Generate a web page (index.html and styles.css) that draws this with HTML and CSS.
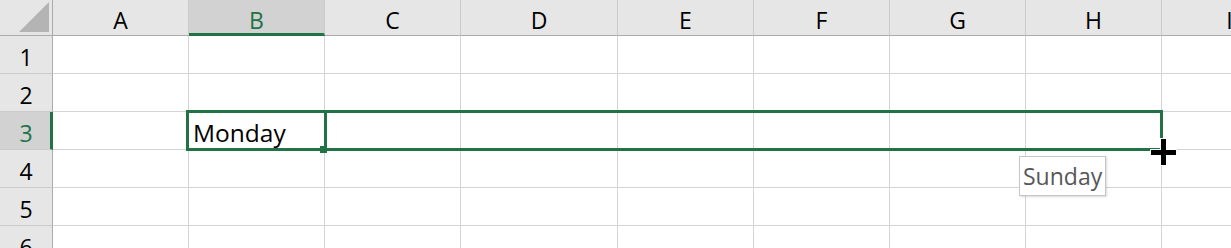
FILE: index.html
```html
<!DOCTYPE html>
<html>
<head>
  <title>Sheet1</title>
  <link rel="stylesheet" href="styles.css">
</head>
<body>
<div class="sheet">
  <!-- column headers -->
  <div class="corner">
    <svg width="53" height="36" viewBox="0 0 53 36"><polygon points="19,32 49,32 49,2" fill="#b4b4b4"/></svg>
  </div>
  <div class="hd">A</div>
  <div class="hd hd-sel">B</div>
  <div class="hd">C</div>
  <div class="hd">D</div>
  <div class="hd">E</div>
  <div class="hd">F</div>
  <div class="hd">G</div>
  <div class="hd">H</div>
  <div class="hd">I</div>

  <!-- row 1 -->
  <div class="rh">1</div>
  <div class="c"></div><div class="c"></div><div class="c"></div><div class="c"></div><div class="c"></div>
  <div class="c"></div><div class="c"></div><div class="c"></div><div class="c"></div>

  <!-- row 2 -->
  <div class="rh">2</div>
  <div class="c"></div><div class="c"></div><div class="c"></div><div class="c"></div><div class="c"></div>
  <div class="c"></div><div class="c"></div><div class="c"></div><div class="c"></div>

  <!-- row 3 -->
  <div class="rh rh-sel">3</div>
  <div class="c"></div><div class="c">Monday</div><div class="c"></div><div class="c"></div><div class="c"></div>
  <div class="c"></div><div class="c"></div><div class="c"></div><div class="c"></div>

  <!-- row 4 -->
  <div class="rh">4</div>
  <div class="c"></div><div class="c"></div><div class="c"></div><div class="c"></div><div class="c"></div>
  <div class="c"></div><div class="c"></div><div class="c"></div><div class="c"></div>

  <!-- row 5 -->
  <div class="rh">5</div>
  <div class="c"></div><div class="c"></div><div class="c"></div><div class="c"></div><div class="c"></div>
  <div class="c"></div><div class="c"></div><div class="c"></div><div class="c"></div>

  <!-- row 6 -->
  <div class="rh">6</div>
  <div class="c"></div><div class="c"></div><div class="c"></div><div class="c"></div><div class="c"></div>
  <div class="c"></div><div class="c"></div><div class="c"></div><div class="c"></div>

  <!-- drag-fill overlay -->
  <div class="range"></div>
  <div class="active"></div>
  <div class="handle"></div>
  <div class="tip">Sunday</div>
  <svg class="cursor" width="29" height="30" viewBox="0 0 29 30">
    <polygon points="12,2 17,2 17,13 27,13 27,18 17,18 17,28 12,28 12,18 2,18 2,13 12,13"
             fill="#000" stroke="#fff" stroke-width="2" paint-order="stroke"/>
  </svg>
</div>
</body>
</html>
```

FILE: styles.css
```css
body {
  margin: 0;
  overflow: hidden;
  background: #fff;
  font-family: "Open Sans", "Noto Sans", sans-serif;
}

.sheet {
  position: relative;
  display: grid;
  grid-template-columns: 53px 136px 136px 136px 157px 136px 136px 136px 136px 136px;
  grid-template-rows: 36px;
  grid-auto-rows: 38px;
  font-size: 23px;
}

.sheet > div {
  box-sizing: border-box;
}

/* headers */
.corner {
  background: #e6e6e6;
  border-right: 1px solid #ababab;
  border-bottom: 1px solid #ababab;
}

.corner svg {
  display: block;
}

.hd {
  display: flex;
  align-items: center;
  justify-content: center;
  padding-top: 5px;
  background: #e6e6e6;
  border-right: 1px solid #cbcbcb;
  border-bottom: 1px solid #ababab;
  color: #000;
}

.hd-sel {
  background: #d2d2d2;
  color: #217346;
  border-bottom: 3px solid #217346;
  padding-top: 7px;
}

.rh {
  display: flex;
  align-items: center;
  justify-content: center;
  padding-top: 4px;
  background: #e6e6e6;
  border-right: 1px solid #ababab;
  border-bottom: 1px solid #cbcbcb;
  color: #000;
}

.rh-sel {
  background: #d2d2d2;
  color: #217346;
  border-right: 3px solid #217346;
  padding-left: 2px;
}

/* cells */
.c {
  display: flex;
  align-items: center;
  padding: 4px 0 0 4px;
  border-right: 1px solid #d4d4d4;
  border-bottom: 1px solid #d4d4d4;
  color: #000;
  font-size: 24.5px;
  white-space: nowrap;
}

/* selection and fill drag */
.range {
  position: absolute;
  left: 186px;
  top: 110px;
  width: 977px;
  height: 41px;
  box-sizing: border-box;
  border: 3px solid #217346;
}

.active {
  position: absolute;
  left: 186px;
  top: 110px;
  width: 141px;
  height: 41px;
  box-sizing: border-box;
  border: 3px solid #217346;
}

.handle {
  position: absolute;
  left: 320px;
  top: 146px;
  width: 7px;
  height: 7px;
  background: #217346;
}

.tip {
  position: absolute;
  left: 1019px;
  top: 156px;
  width: 87px;
  height: 40px;
  box-sizing: border-box;
  padding: 4px 0 0 3px;
  background: #fff;
  border: 1px solid #c6c6c6;
  box-shadow: 1px 1px 2px rgba(0, 0, 0, 0.15);
  color: #575757;
  font-size: 23px;
  line-height: 30px;
  white-space: nowrap;
}

.cursor {
  position: absolute;
  left: 1149px;
  top: 137px;
}
```
